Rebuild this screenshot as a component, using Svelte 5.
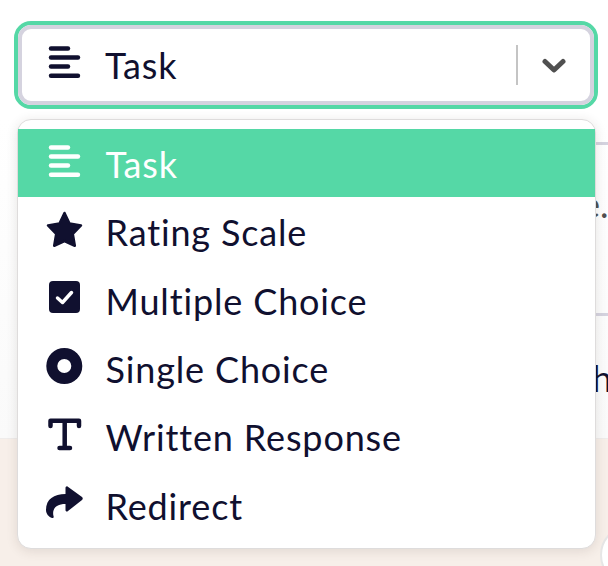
<script>
  const items = [
    { id: 'task', label: 'Task' },
    { id: 'star', label: 'Rating Scale' },
    { id: 'check', label: 'Multiple Choice' },
    { id: 'radio', label: 'Single Choice' },
    { id: 'text', label: 'Written Response' },
    { id: 'redirect', label: 'Redirect' }
  ];
</script>

{#snippet icon(id)}
  <svg class="icon" viewBox="0 0 36 36" aria-hidden="true">
    {#if id === 'task'}
      <g class="bars">
        <path d="M5 2.500H22" /><path d="M5 11.500H32" /><path d="M5 20.500H22" /><path d="M5 29.700H32" />
      </g>
    {:else if id === 'star'}
      <path class="fill" stroke-linejoin="round" d="M18.500 0 23.500 10.500 35 12.500 26.800 21 28.800 32.800 18.500 28 8.200 32.800 10.200 21 2 12.500 13.500 10.500Z" />
    {:else if id === 'check'}
      <rect class="solid" x="3" y="0" width="31" height="32" rx="4" />
      <path class="tick" d="M11.500 17 16.500 21.500 25.500 11.500" />
    {:else if id === 'radio'}
      <path class="solid" fill-rule="evenodd" d="M18.300 -2a18 18 0 1 0 0 36a18 18 0 1 0 0-36Zm0 11a7 7 0 1 1 0 14a7 7 0 1 1 0-14Z" />
    {:else if id === 'text'}
      <path class="glyph" d="M4.500 8V2.800H33V8M18.700 2.800V29.500M13.500 30H24" />
    {:else}
      <path class="solid" d="M21.500 0.500C20.500 0 19.500 1 19.500 2V8C8 8 0 13 0 24C0 28 3 31 6 32C7.500 32.500 8 31 7.500 30C6 24 9 18 19.500 18V24C19.500 25.500 21 26 22 25L36 14C37 13 37 12 36 11Z" />
    {/if}
  </svg>
{/snippet}

<div class="page">
  <section class="content">
    <div class="select">
      <div class="control">
        <span class="value">{@render icon('task')}<span class="label">Task</span></span>
        <span class="sep"></span>
        <svg class="chevron" viewBox="0 0 24 16" aria-hidden="true"><path d="M3 3.500 12 12 21 3.500" /></svg>
      </div>
    </div>
    <div class="behind">
      <div class="rule first"></div>
      <p class="peek dots">e.</p>
      <div class="rule second"></div>
      <p class="peek h">h</p>
    </div>
  </section>
  <section class="footer"><span class="circle"></span></section>

  <ul class="menu">
    {#each items as item, i}
      <li class:active={i === 0}>
        {@render icon(item.id)}
        <span class="label">{item.label}</span>
      </li>
    {/each}
  </ul>
</div>

<style>
  :global(body) {
    margin: 0;
    background: #fff;
  }
  .page {
    position: relative;
    width: 608px;
    height: 566px;
    overflow: hidden;
    font-family: Lato, "Open Sans", sans-serif;
    color: #10102f;
  }
  .content {
    height: 439px;
    box-sizing: border-box;
    padding: 21px 10px 0 14px;
    background: linear-gradient(#fff 120px, #fafafa);
    border-bottom: 1px solid #efeceb;
  }
  .footer {
    position: relative;
    height: 127px;
    background: #f7efe9;
  }
  .circle {
    position: absolute;
    left: 600px;
    top: 86px;
    width: 60px;
    height: 60px;
    box-sizing: border-box;
    border: 2px solid #e6e6e6;
    border-radius: 50%;
    background: #fff;
  }
  .select {
    box-sizing: border-box;
    height: 88px;
    border: 4px solid #55d8a6;
    border-radius: 17px;
  }
  .control {
    box-sizing: border-box;
    height: 80px;
    display: flex;
    align-items: center;
    padding: 0 24px 0 24px;
    border: 4px solid #d5d3df;
    border-radius: 13px;
    background: #fff;
  }
  .value {
    display: flex;
    align-items: center;
    gap: 23px;
    flex: 1;
  }
  .value .icon {
    margin-top: -2px;
  }
  .sep {
    width: 2px;
    height: 40px;
    margin-right: 24px;
    background: #c4c4c4;
  }
  .chevron {
    width: 24px;
    height: 16px;
    margin-top: 2px;
    fill: none;
    stroke: #505050;
    stroke-width: 5;
    stroke-linecap: round;
    stroke-linejoin: round;
  }
  .behind {
    position: relative;
    height: 300px;
    margin-top: 33px;
  }
  .rule {
    position: absolute;
    right: -10px;
    width: 40px;
    height: 3px;
    background: #d5d3df;
  }
  .rule.first { top: 0; }
  .rule.second { top: 171px; }
  .peek {
    position: absolute;
    margin: 0;
    font-size: 36px;
    line-height: 40px;
  }
  .dots { left: 567px; top: 42px; color: #505050; }
  .h { left: 578px; top: 216px; }

  .menu {
    position: absolute;
    left: 16.500px;
    top: 119px;
    box-sizing: border-box;
    width: 579px;
    height: 430px;
    margin: 0;
    padding: 8.500px 0;
    list-style: none;
    background: #fff;
    border: 1.500px solid #dedcdc;
    border-radius: 14px;
    box-shadow: 0 2px 12px rgba(60, 40, 30, 0.12);
  }
  li {
    box-sizing: border-box;
    height: 68.33px;
    display: flex;
    align-items: center;
    gap: 24px;
    padding-left: 28px;
  }
  li .label {
    margin-top: 3px;
  }
  li.active {
    background: #55d8a6;
    color: #fff;
  }
  .icon {
    width: 36px;
    height: 36px;
    flex: none;
    overflow: visible;
  }
  .label {
    font-size: 36px;
    line-height: 40px;
    letter-spacing: 0.85px;
    white-space: nowrap;
  }
  .bars path {
    stroke: currentColor;
    stroke-width: 4.400;
    stroke-linecap: round;
    fill: none;
  }
  .solid, .fill {
    fill: currentColor;
  }
  .fill {
    stroke: currentColor;
    stroke-width: 2.500;
  }
  .tick {
    fill: none;
    stroke: #fff;
    stroke-width: 3.500;
    stroke-linecap: round;
    stroke-linejoin: round;
  }
  .glyph {
    fill: none;
    stroke: currentColor;
    stroke-width: 4.500;
    stroke-linecap: round;
    stroke-linejoin: round;
  }
</style>
